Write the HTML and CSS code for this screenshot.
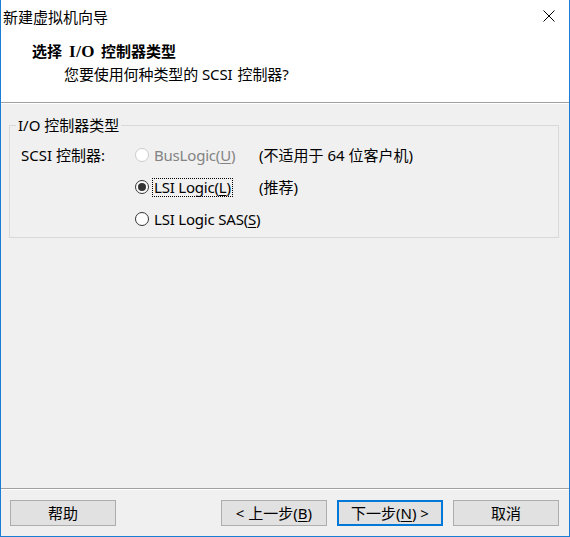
FILE: index.html
```html
<!DOCTYPE html>
<html lang="zh-CN">
<head>
<meta charset="utf-8">
<title>新建虚拟机向导</title>
<link rel="stylesheet" href="styles.css">
</head>
<body>
<div class="window">
  <div class="titlebar">
    <span class="title">新建虚拟机向导</span>
    <svg class="close" width="12" height="12" viewBox="0 0 12 12"><path d="M0.5 0.5 L11.5 11.5 M11.5 0.5 L0.5 11.5" stroke="#000" stroke-width="1" fill="none"/></svg>
  </div>
  <div class="header">
    <div class="h-title">选择<span class="io">I/O</span>控制器类型</div>
    <div class="h-sub">您要使用何种类型的 <span class="scsi">SCSI</span>控制器?</div>
  </div>
  <div class="content">
    <div class="group">
      <div class="legend">I/O 控制器类型</div>
      <div class="grid">
        <div class="label">SCSI 控制器:</div>
        <div class="opt disabled"><span class="radio"></span><span class="text">BusLogic(<u>U</u>)</span></div>
        <div class="note">(不适用于 64 位客户机)</div>
        <div></div>
        <div class="opt"><span class="radio checked"></span><span class="text focus">LSI Logic(<u>L</u>)</span></div>
        <div class="note">(推荐)</div>
        <div></div>
        <div class="opt"><span class="radio"></span><span class="text">LSI Logic SAS(<u>S</u>)</span></div>
        <div></div>
      </div>
    </div>
  </div>
  <div class="footer">
    <button class="btn help">帮助</button>
    <div class="nav">
      <button class="btn">&lt; 上一步(<u>B</u>)</button>
      <button class="btn default">下一步(<u>N</u>) &gt;</button>
      <button class="btn">取消</button>
    </div>
  </div>
</div>
</body>
</html>
```

FILE: styles.css
```css
html, body {
  margin: 0;
  padding: 0;
  background: #f0f0f0;
}
body {
  font-family: "Noto Sans", "Noto Sans CJK SC", sans-serif;
  font-size: 15px;
  color: #000;
}
.window {
  width: 570px;
  height: 537px;
  box-sizing: border-box;
  border: 1px solid #1a7fd4;
  border-top: none;
  display: flex;
  flex-direction: column;
  background: #f0f0f0;
}
.titlebar {
  height: 31px;
  flex: none;
  background: #fff;
  display: flex;
  align-items: center;
  justify-content: space-between;
  padding: 0 14px 0 2px;
  box-sizing: border-box;
}
.title {
  line-height: 20px;
  padding-top: 2px;
}
.close {
  display: block;
  margin-top: 1px;
}
.header {
  height: 72px;
  box-sizing: border-box;
  flex: none;
  background: #fff;
  border-bottom: 1px solid #a0a0a0;
  padding: 10px 0 0 31px;
}
.h-title {
  font-weight: bold;
  line-height: 20px;
}
.io {
  font-family: "Liberation Serif", serif;
  font-size: 17px;
  letter-spacing: 0.5px;
  margin: 0 6px 0 7px;
}
.h-sub {
  line-height: 20px;
  margin: 2px 0 0 32px;
  letter-spacing: -0.1px;
}
.scsi {
  margin-right: 5px;
}
.content {
  flex: 1;
  border-top: 1px solid #fff;
  padding: 21px 10px 0 8px;
}
.group {
  position: relative;
  height: 113px;
  box-sizing: border-box;
  border: 1px solid #d9d9d9;
  padding: 13px 0 0 11px;
}
.legend {
  position: absolute;
  top: -11px;
  left: 6px;
  padding: 0 2px;
  line-height: 20px;
  background: #f0f0f0;
}
.grid {
  display: grid;
  grid-template-columns: 113px 125px auto;
  grid-auto-rows: 32px;
  align-items: center;
}
.label, .note {
  line-height: 20px;
  white-space: nowrap;
}
.opt {
  display: flex;
  align-items: center;
}
.radio {
  width: 14px;
  height: 14px;
  box-sizing: border-box;
  border: 1px solid #333;
  border-radius: 50%;
  background: #fff;
  margin-left: 1px;
  position: relative;
  flex: none;
}
.radio.checked::after {
  content: "";
  position: absolute;
  left: 2px;
  top: 2px;
  width: 8px;
  height: 8px;
  border-radius: 50%;
  background: #333;
}
.disabled .radio {
  border-color: #cccccc;
}
.disabled .text {
  color: #838383;
}
.text {
  margin-left: 3px;
  padding: 0 1px;
  border: 1px dotted transparent;
  line-height: 17px;
  white-space: nowrap;
  letter-spacing: -0.2px;
}
.text.focus {
  border-color: #000;
}
u {
  text-decoration: underline;
  text-underline-offset: 2px;
}
.footer {
  flex: none;
  height: 48px;
  box-sizing: border-box;
  border-top: 1px solid #a0a0a0;
  box-shadow: inset 0 1px 0 #fff;
  padding: 11px 10px 0 9px;
  display: flex;
  justify-content: space-between;
  align-items: flex-start;
}
.nav {
  display: flex;
  gap: 10px;
}
.btn {
  width: 106px;
  height: 26px;
  box-sizing: border-box;
  border: 1px solid #adadad;
  background: #e1e1e1;
  font: inherit;
  color: #000;
  padding: 0;
  margin: 0;
  line-height: 22px;
}
.btn.default {
  border: 2px solid #0078d7;
}
```
